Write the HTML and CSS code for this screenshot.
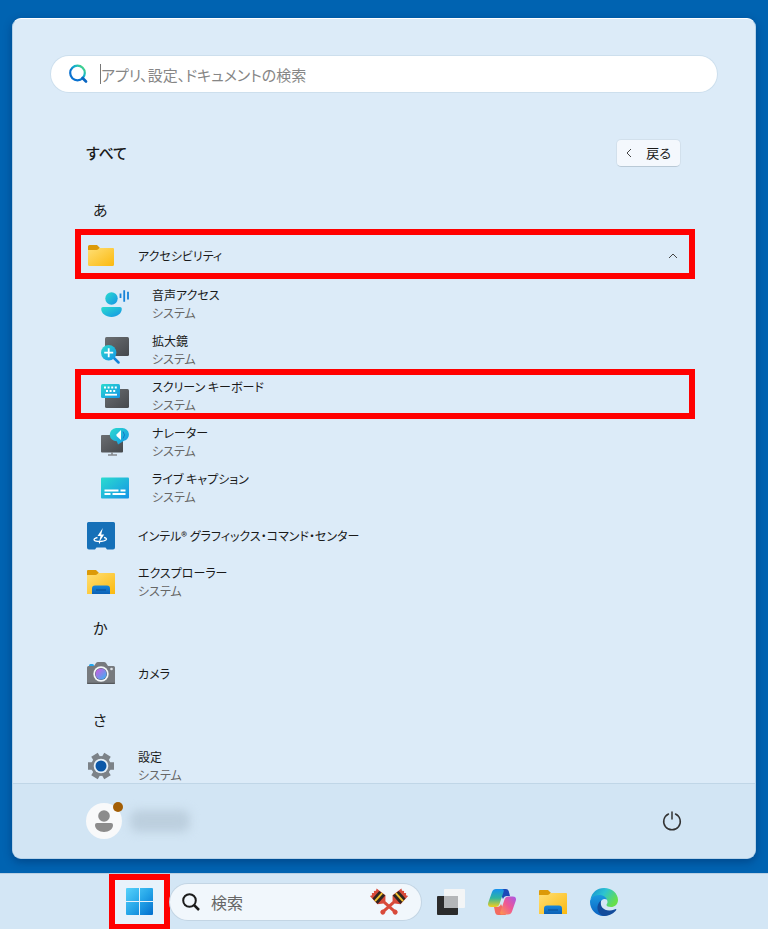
FILE: index.html
```html
<!DOCTYPE html>
<html lang="ja">
<head>
    <meta charset="UTF-8">
    <meta name="viewport" content="width=device-width, initial-scale=1.0">
    <title>スタート メニュー</title>
    <link rel="stylesheet" href="styles.css">
</head>
<body>
    <!-- Shared gradients and the folder symbol -->
    <svg class="defs" width="0" height="0" aria-hidden="true">
        <defs>
            <linearGradient id="yellow" x1="0" y1="0" x2="1" y2="1">
                <stop offset="0" stop-color="#ffdf75"/><stop offset="1" stop-color="#fbb90f"/>
            </linearGradient>
            <linearGradient id="cyan" x1="0" y1="0" x2="1" y2="1">
                <stop offset="0" stop-color="#2bdccf"/><stop offset="1" stop-color="#1593e6"/>
            </linearGradient>
            <linearGradient id="gray" x1="0" y1="0" x2="1" y2="1">
                <stop offset="0" stop-color="#6b6e72"/><stop offset="1" stop-color="#45484c"/>
            </linearGradient>
            <linearGradient id="blue" x1="0" y1="0" x2="0" y2="1">
                <stop offset="0" stop-color="#1787dc"/><stop offset="1" stop-color="#0b60b5"/>
            </linearGradient>
            <symbol id="explorer" viewBox="0 0 28 28">
                <path d="M0 3a1 1 0 0 1 1-1h8l3 3-2 4H0z" fill="#dc9a08"/>
                <path d="M0 7h8.500q1 0 1.700-.700L11.500 5H27a1 1 0 0 1 1 1v20H0z" fill="url(#yellow)"/>
                <path d="M5 26v-5.500a3 3 0 0 1 3-3h12a3 3 0 0 1 3 3V26z" fill="url(#blue)"/>
                <path d="M9 22h10" stroke="#0a4c92" stroke-width="1"/>
            </symbol>
        </defs>
    </svg>

    <main class="start-menu">
        <label class="search-box">
            <svg class="search-icon" width="20" height="20" viewBox="0 0 20 20" fill="none">
                <defs>
                    <linearGradient id="lens" x1="0" y1="1" x2="1" y2="0">
                        <stop offset=".35" stop-color="#0a72d0"/><stop offset=".65" stop-color="#16b5c9"/><stop offset="1" stop-color="#5be06c"/>
                    </linearGradient>
                </defs>
                <circle cx="9.500" cy="9" r="7.300" stroke="url(#lens)" stroke-width="2.200"/>
                <path d="M14.500 14l3.500 3.500" stroke="#0a66c2" stroke-width="2.700" stroke-linecap="round"/>
            </svg>
            <input type="text" class="search-input" aria-label="検索" placeholder="アプリ、設定、ドキュメントの検索">
        </label>

        <div class="list-header">
            <h1>すべて</h1>
            <button type="button" class="back-button">
                <svg width="6" height="10" viewBox="0 0 6 10" fill="none" stroke="#444"><path d="M5 1L1 5l4 4"/></svg>
                戻る
            </button>
        </div>

        <ul class="app-list">
            <li class="letter">あ</li>
            <li>
                <button type="button" class="app highlight" aria-expanded="true">
                    <svg class="icon" viewBox="0 0 28 28">
                        <path d="M1 4.500A1.500 1.500 0 0 1 2.500 3H10l3 3-2 4H1z" fill="#dc9a08"/>
                        <path d="M1 8h8.500q1 0 1.700-.700L12.500 6H26a1 1 0 0 1 1 1v15.500a1.500 1.500 0 0 1-1.500 1.500h-23A1.500 1.500 0 0 1 1 22.500z" fill="url(#yellow)"/>
                    </svg>
                    <span class="name">アクセシビリティ</span>
                    <svg class="chevron" width="10" height="6" viewBox="0 0 10 6" fill="none" stroke="#444"><path d="M1 5l4-4 4 4"/></svg>
                </button>
                <ul class="sub-list">
                    <li>
                        <a href="#" class="app">
                            <svg class="icon" viewBox="0 0 28 28">
                                <circle cx="10.500" cy="8.500" r="6.200" fill="url(#cyan)"/>
                                <path d="M2 17h17a1.800 1.800 0 0 1 1.800 1.800c0 4.700-4.500 8.200-10.300 8.200S.2 23.500.2 18.800A1.800 1.800 0 0 1 2 17z" fill="url(#cyan)"/>
                                <path d="M19.500 3.500v4.500M23.200.2v11.500M27 1.800v7.700" stroke="#1683d8" stroke-width="1.800"/>
                            </svg>
                            <span class="name">音声アクセス<small>システム</small></span>
                        </a>
                    </li>
                    <li>
                        <a href="#" class="app">
                            <svg class="icon" viewBox="0 0 28 28">
                                <rect x="4" y="1" width="24" height="19" rx="1.500" fill="url(#gray)"/>
                                <path d="M12.500 21.500l5 5" stroke="#1683d8" stroke-width="2.500" stroke-linecap="round"/>
                                <circle cx="7.700" cy="16.700" r="7.700" fill="url(#cyan)"/>
                                <path d="M7.700 12.200v9M3.200 16.700h9" stroke="#fff" stroke-width="1.800"/>
                            </svg>
                            <span class="name">拡大鏡<small>システム</small></span>
                        </a>
                    </li>
                    <li>
                        <a href="#" class="app highlight">
                            <svg class="icon" viewBox="0 0 28 28">
                                <rect x="4" y="7" width="24" height="19" rx="1.500" fill="url(#gray)"/>
                                <rect x="0" y="2" width="19" height="14" rx="1.500" fill="url(#cyan)"/>
                                <path d="M3 5.500h13M5 9h10" stroke="#fff" stroke-width="2" stroke-dasharray="2 1.600"/>
                                <path d="M4 12.700h12" stroke="#fff" stroke-width="1.800"/>
                            </svg>
                            <span class="name">スクリーン キーボード<small>システム</small></span>
                        </a>
                    </li>
                    <li>
                        <a href="#" class="app">
                            <svg class="icon" viewBox="0 0 28 28">
                                <rect x="0" y="7" width="22" height="17.500" rx="1" fill="url(#gray)"/>
                                <path d="M11 24v3M7 27h9" stroke="#85898d" stroke-width="1.600"/>
                                <path d="M15 0h6.500a6.500 6.500 0 0 1 1.500 12.800l-6 3.700-1.200-3.300A6.600 6.600 0 0 1 15 0z" fill="url(#cyan)"/>
                                <path d="M15.500 6.500L20 2v10l-4.500-4z" fill="#fff"/>
                                <path d="M22 3.500q3 3.500 0 7" fill="none" stroke="#0f79cb"/>
                            </svg>
                            <span class="name">ナレーター<small>システム</small></span>
                        </a>
                    </li>
                    <li>
                        <a href="#" class="app">
                            <svg class="icon" viewBox="0 0 28 28">
                                <rect x="0" y="3.500" width="28" height="21" rx="1" fill="url(#cyan)"/>
                                <path d="M3.500 16.500h14M19.500 16.500h5M3.500 20h6M11.500 20h13" stroke="#fff" stroke-width="1.800"/>
                            </svg>
                            <span class="name">ライブ キャプション<small>システム</small></span>
                        </a>
                    </li>
                </ul>
            </li>
            <li>
                <a href="#" class="app">
                    <svg class="icon" viewBox="0 0 28 28">
                        <path d="M1.500 0h25A1.500 1.500 0 0 1 28 1.500v24a2 2 0 0 1-2 2h-6l-1.500-2h-9l-1.500 2H2a2 2 0 0 1-2-2v-24A1.500 1.500 0 0 1 1.500 0z" fill="#1670b8"/>
                        <path d="M15.800 6l-5.300 8h3l-1.300 6 5-7.500h-3z" fill="#fff"/>
                        <path d="M10.500 15.500c-6 1.700-3.500 4 2 4 6.500 0 9.500-3 4.500-4" fill="none" stroke="#fff" stroke-width="1.300"/>
                        <path d="M12.500 19.500v2" stroke="#fff"/>
                    </svg>
                    <span class="name">インテル® グラフィックス・コマンド・センター</span>
                </a>
            </li>
            <li>
                <a href="#" class="app">
                    <svg class="icon"><use href="#explorer"/></svg>
                    <span class="name">エクスプローラー<small>システム</small></span>
                </a>
            </li>
            <li class="letter">か</li>
            <li>
                <a href="#" class="app">
                    <svg class="icon" viewBox="0 0 28 28">
                        <defs>
                            <linearGradient id="camera-lens" x1="0" y1="0" x2="1" y2="1">
                                <stop offset=".2" stop-color="#b869e4"/><stop offset="1" stop-color="#31b6f4"/>
                            </linearGradient>
                        </defs>
                        <path d="M2 8V5.500A1.500 1.500 0 0 1 3.500 4h2A1.500 1.500 0 0 1 7 5.500V8z" fill="#21a6ee"/>
                        <path d="M1.500 6H7l2-3q.700-1 2-1h6q1.300 0 2 1l2 3h5.500A1.500 1.500 0 0 1 28 7.500V23a1 1 0 0 1-1 1H1a1 1 0 0 1-1-1V7.500A1.500 1.500 0 0 1 1.500 6z" fill="#777a7e"/>
                        <path d="M0 22.700h28V23a1 1 0 0 1-1 1H1a1 1 0 0 1-1-1z" fill="#55585c"/>
                        <circle cx="14" cy="14" r="7.700" fill="#f3f6f8"/>
                        <circle cx="14" cy="14" r="6" fill="#5c6478"/>
                        <circle cx="14" cy="14" r="5.500" fill="url(#camera-lens)"/>
                        <circle cx="24.500" cy="9" r="1.300" fill="#dfe3e6"/>
                    </svg>
                    <span class="name">カメラ</span>
                </a>
            </li>
            <li class="letter">さ</li>
            <li>
                <a href="#" class="app">
                    <svg class="icon" viewBox="0 0 28 28">
                        <circle cx="14" cy="14" r="10" fill="#7c8288"/>
                        <path d="M1 14h26M7.500 2.750l13 22.500M20.500 2.750l-13 22.500" stroke="#7c8288" stroke-width="7.500"/>
                        <circle cx="14" cy="14" r="7.300" fill="#e6f0f8"/>
                        <circle cx="14" cy="14" r="5.500" fill="#0b57a7"/>
                    </svg>
                    <span class="name">設定<small>システム</small></span>
                </a>
            </li>
        </ul>

        <footer class="menu-footer">
            <button type="button" class="account" aria-label="アカウント">
                <span class="avatar">
                    <svg width="36" height="36" viewBox="0 0 36 36" fill="#8c8c8c">
                        <circle cx="18" cy="13" r="5.800"/>
                        <path d="M11 20h14a2 2 0 0 1 2 2c0 4-4 7-9 7s-9-3-9-7a2 2 0 0 1 2-2z"/>
                    </svg>
                    <span class="badge"></span>
                </span>
                <span class="account-name"></span>
            </button>
            <button type="button" class="power" aria-label="電源">
                <svg width="20" height="20" viewBox="0 0 20 20" fill="none" stroke="#333" stroke-width="1.500" stroke-linecap="round">
                    <path d="M6.500 3a8.300 8.300 0 1 0 7 0M10 1v7"/>
                </svg>
            </button>
        </footer>
    </main>

    <nav class="taskbar">
        <button type="button" class="start-button" aria-label="スタート">
            <svg width="28" height="28" viewBox="0 0 28 28">
                <defs>
                    <linearGradient id="win" gradientUnits="userSpaceOnUse" x1="0" y1="0" x2="28" y2="28">
                        <stop offset="0" stop-color="#57d2fb"/><stop offset=".5" stop-color="#25a5e8"/><stop offset="1" stop-color="#0069cb"/>
                    </linearGradient>
                </defs>
                <path d="M1 0h12v13H0V1a1 1 0 0 1 1-1zM14 0h12a1 1 0 0 1 1 1v12H14zM0 14h13v13H1a1 1 0 0 1-1-1zM14 14h13v12a1 1 0 0 1-1 1H14z" fill="url(#win)"/>
            </svg>
        </button>
        <label class="task-search">
            <svg width="18" height="18" viewBox="0 0 18 18" fill="none" stroke="#1c1c1c" stroke-width="2">
                <circle cx="7.500" cy="7.500" r="6.300"/>
                <path d="M12 12l5 5" stroke-width="2.500"/>
            </svg>
            <input type="text" class="task-input" aria-label="タスクバーの検索" placeholder="検索">
            <svg class="paddles" width="40" height="28" viewBox="0 0 40 28">
                <defs>
                    <g id="paddle">
                        <path d="M-5-1l2 1 1.500-1.500L0 0l1.500-1.500L3 0l2-1 1 11-4.500 4v14h-3V14L-6 10z" fill="#d84a3a"/>
                        <path d="M-5 2.500H5l.700 7.500H-5.700z" fill="#302522"/>
                        <path d="M-5.400 6.200H5.400" stroke="#f2c230" stroke-width="2"/>
                        <circle cx="0" cy="28.500" r="2.500" fill="#d84a3a"/>
                    </g>
                </defs>
                <use href="#paddle" transform="translate(5 5) rotate(-48)"/>
                <use href="#paddle" transform="translate(35 5) scale(-1 1) rotate(-48)"/>
            </svg>
        </label>
        <div class="task-icons">
            <button type="button" aria-label="タスク ビュー">
                <svg class="icon" viewBox="0 0 28 28">
                    <rect x="0" y="8" width="21" height="19" rx="1" fill="#2b2b2b"/>
                    <rect x="7" y="1" width="21" height="19" rx="1" fill="#f3f5f6"/>
                    <path d="M7 8h14v12H8a1 1 0 0 1-1-1z" fill="#b4b6b8"/>
                </svg>
            </button>
            <button type="button" aria-label="Copilot">
                <svg class="icon" viewBox="0 0 28 28">
                    <defs>
                        <linearGradient id="cop-a" x1="0" y1="0" x2="0" y2="1">
                            <stop offset="0" stop-color="#1590f0"/><stop offset=".5" stop-color="#2fb5a0"/><stop offset="1" stop-color="#f4cf1c"/>
                        </linearGradient>
                        <linearGradient id="cop-b" x1="1" y1="0" x2="0" y2="1">
                            <stop offset="0" stop-color="#a858e8"/><stop offset=".5" stop-color="#ef5794"/><stop offset="1" stop-color="#fd9a4c"/>
                        </linearGradient>
                    </defs>
                    <path d="M10 1h8q2 0 2.700 2L22 8h-3q-3 0-4 3z" fill="#1c49b8"/>
                    <path d="M8 1h6q2.500 0 1.500 3l-4 12q-1 3-4 3H3Q-1 19 .3 14.500L4 4q1-3 4-3z" fill="url(#cop-a)"/>
                    <path d="M18 27h-8q-2 0-2.700-2L6 19h3q3 0 4-3z" fill="#f36b60"/>
                    <path d="M20 26.500h-6q-2.500 0-1.500-3l4-12q1-3 4-3H25q4 0 2.700 4.500L24 23.500q-1 3-4 3z" fill="url(#cop-b)"/>
                </svg>
            </button>
            <button type="button" aria-label="エクスプローラー">
                <svg class="icon"><use href="#explorer"/></svg>
            </button>
            <button type="button" aria-label="Edge">
                <svg class="icon" viewBox="0 0 28 28">
                    <defs>
                        <linearGradient id="edge-a" x1="0" y1="0" x2="1" y2=".5">
                            <stop offset="0" stop-color="#148bd0"/><stop offset=".5" stop-color="#2cc3d2"/><stop offset="1" stop-color="#67df4b"/>
                        </linearGradient>
                        <linearGradient id="edge-b" x1="0" y1="0" x2="0" y2="1">
                            <stop offset="0" stop-color="#1b9ae0"/><stop offset="1" stop-color="#0b62c2"/>
                        </linearGradient>
                    </defs>
                    <path d="M.5 11C2 4.500 7 0 14 0c8 0 14 5.500 14 12 0 4.500-3.500 7-7 7-3 0-4.500-1-4.500-2s1-1.200 1-3c0-3-2.500-5-6-5C6 9 1.500 10 .5 11z" fill="url(#edge-a)"/>
                    <path d="M0 14c0-4 4-7 9-7 4 0 7 2 8 4.500-3-1.500-6 0-6.500 3.500-.500 5 3 9 8 11-1.500 1.300-3 2-5 2C6 28 0 21.500 0 14z" fill="url(#edge-b)"/>
                    <path d="M11 12.500c-1.500 6 3 10.500 9 10 3-.200 5.500-1.700 6-1.500s.500 1-.500 2C22.500 26.500 18 28 14 28 9 27 7 22 7.500 18.500 8 15.500 9.500 13.500 11 12.500z" fill="#124b9b"/>
                </svg>
            </button>
        </div>
    </nav>
</body>
</html>
```
FILE: styles.css
```css
* {
    box-sizing: border-box;
}

body {
    display: flex;
    flex-direction: column;
    height: 100vh;
    margin: 0;
    background-color: #0063b1;
    color: #1a1a1a;
    font-family: "Noto Sans CJK JP", sans-serif;
    font-size: 12px;
    line-height: 18px;
    font-feature-settings: "palt";
    overflow: hidden;
}

button,
input {
    padding: 0;
    border: 0;
    background: none;
    color: inherit;
    font: inherit;
    font-feature-settings: inherit;
}

ul {
    margin: 0;
    padding: 0;
    list-style: none;
}

svg {
    display: block;
    flex-shrink: 0;
}

.defs {
    position: absolute;
}

.icon {
    width: 28px;
    height: 28px;
}

/* Start menu panel */
.start-menu {
    display: flex;
    flex: 1;
    flex-direction: column;
    min-height: 0;
    margin: 18px 12px 14px;
    border: 1px solid #b5d2e9;
    border-top-color: #fff;
    border-radius: 9px;
    background-color: #dcebf8;
    box-shadow: 0 3px 8px rgba(0, 30, 80, 0.4);
    overflow: hidden;
}

.search-box {
    display: flex;
    align-items: center;
    gap: 12px;
    height: 36px;
    margin: 37px 38px;
    padding: 0 17px;
    border-radius: 18px;
    background-color: #fff;
    box-shadow: 0 0 0 1px #cddfed;
}

.search-input {
    flex: 1;
    height: 20px;
    border-left: 1px solid #777;
    font-size: 15px;
    outline: none;
}

.search-input::placeholder {
    color: #868686;
    opacity: 1;
}

.list-header {
    display: flex;
    align-items: center;
    justify-content: space-between;
    height: 28px;
    margin: 10px 74px 20px 73px;
}

.list-header h1 {
    margin: 0;
    font-size: 15px;
    font-weight: 500;
}

.back-button {
    display: flex;
    align-items: center;
    gap: 14px;
    height: 28px;
    padding: 0 9px;
    border: 1px solid #d2e0ec;
    border-bottom-color: #b9c9d6;
    border-radius: 5px;
    background-color: #f4f8fd;
    font-size: 13px;
}

/* App list */
.app-list {
    flex: 1;
    min-height: 0;
    padding: 0 60px 0 62px;
    overflow: hidden;
}

.letter {
    display: flex;
    align-items: center;
    height: 46px;
    padding-left: 18px;
    font-size: 15px;
}

.app {
    position: relative;
    display: flex;
    align-items: center;
    gap: 23px;
    width: 100%;
    height: 46px;
    padding: 0 17px 0 12px;
    color: #1a1a1a;
    text-align: left;
    text-decoration: none;
}

.sub-list {
    margin: 2px 0;
}

.sub-list .app {
    padding-left: 26px;
}

.name {
    flex: 1;
}

.name small {
    display: block;
    color: #666;
    font-size: 12px;
}

.highlight::after {
    content: "";
    position: absolute;
    inset: -4px 0 0;
    border: 6px solid #f00;
}

/* Footer */
.menu-footer {
    display: flex;
    align-items: center;
    justify-content: space-between;
    height: 75px;
    padding: 0 73px;
    border-top: 1px solid #c0d6e7;
    background-color: #d2e5f4;
}

.account {
    display: flex;
    align-items: center;
    gap: 8px;
}

.avatar {
    position: relative;
    border-radius: 50%;
    background-color: #f8f9fa;
}

.badge {
    position: absolute;
    top: -1px;
    right: -1px;
    width: 10px;
    height: 10px;
    border-radius: 50%;
    background-color: #a35e05;
}

.account-name {
    width: 60px;
    height: 22px;
    border-radius: 8px;
    background-color: #bccfde;
    filter: blur(5px);
}

/* Taskbar */
.taskbar {
    display: flex;
    align-items: center;
    height: 56px;
    padding-left: 109px;
    border-top: 1px solid #b9cfe2;
    background-color: #d3e6f5;
}

.start-button {
    display: flex;
    align-items: center;
    justify-content: center;
    width: 61px;
    height: 56px;
    border: 6px solid #f00;
    background-color: #e8f2fb;
}

.task-search {
    display: flex;
    align-items: center;
    gap: 11px;
    width: 251px;
    height: 36px;
    padding: 0 12px;
    border-radius: 18px;
    background-color: #f1f7fc;
    box-shadow: 0 0 0 1px #c3d5e4;
}

.task-input {
    flex: 1;
    min-width: 0;
    font-size: 16px;
    outline: none;
}

.task-input::placeholder {
    color: #666;
    opacity: 1;
}

.task-icons {
    display: flex;
    gap: 23px;
    margin-left: 16px;
}
```
